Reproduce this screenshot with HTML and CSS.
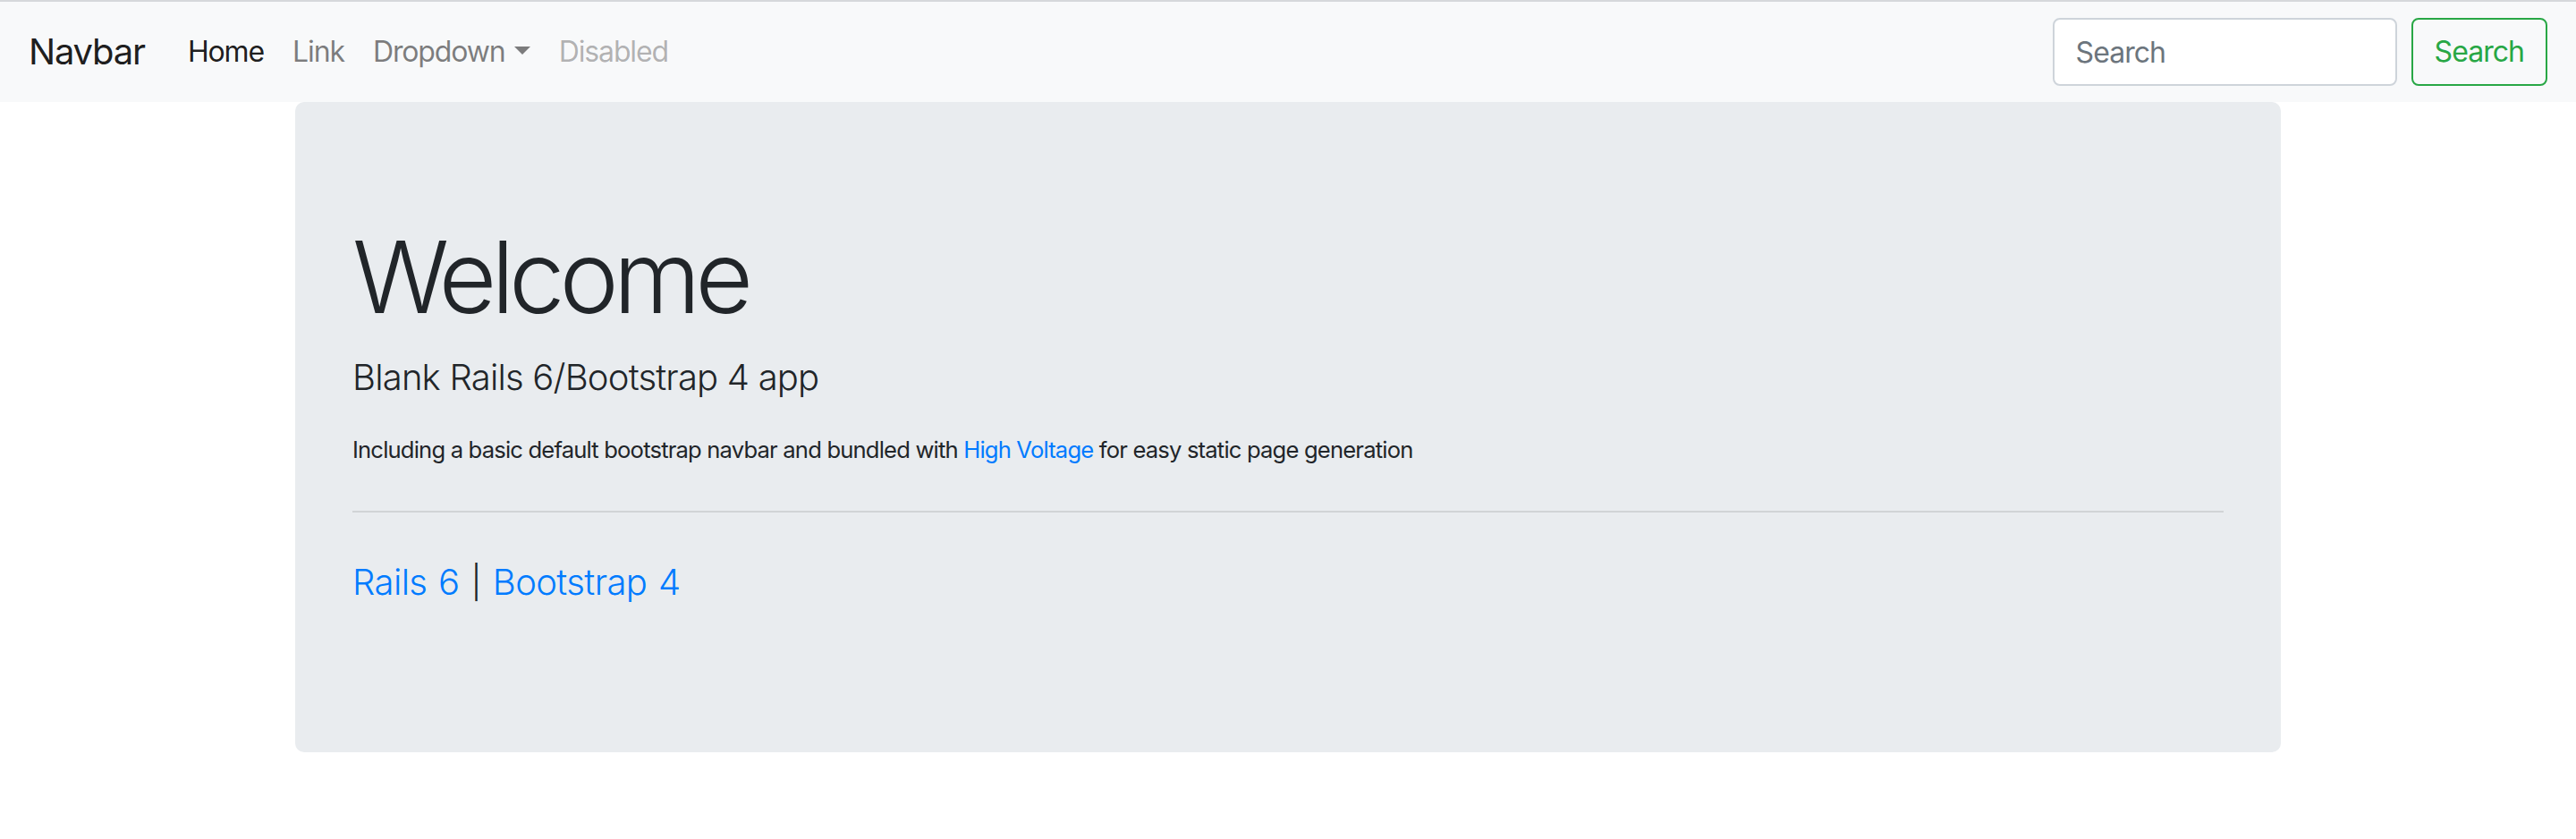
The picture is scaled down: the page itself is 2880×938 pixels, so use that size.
FILE: index.html
```html
<!DOCTYPE html>
<html lang="en">
<head>
<meta charset="utf-8">
<title>Blank Rails 6/Bootstrap 4 app</title>
<link rel="stylesheet" href="styles.css">
</head>
<body>
<div class="page">
  <nav class="navbar">
    <div class="navbar-left">
      <a class="brand" href="#">Navbar</a>
      <ul class="nav">
        <li><a class="nav-link active" href="#">Home</a></li>
        <li><a class="nav-link" href="#">Link</a></li>
        <li><a class="nav-link dropdown" href="#">Dropdown<span class="caret"></span></a></li>
        <li><a class="nav-link disabled" href="#">Disabled</a></li>
      </ul>
    </div>
    <form class="search-form">
      <input class="search-input" type="search" placeholder="Search" aria-label="Search">
      <button class="btn-outline-success" type="button">Search</button>
    </form>
  </nav>
  <main class="container">
    <div class="jumbotron">
      <h1 class="display-4">Welcome</h1>
      <p class="lead">Blank Rails 6/Bootstrap 4 app</p>
      <p class="small-text">Including a basic default bootstrap navbar and bundled with <a href="#">High Voltage</a> for easy static page generation</p>
      <hr class="divider">
      <p class="lead lead-links"><a href="#">Rails 6</a> <span class="pipe">|</span> <a href="#">Bootstrap 4</a></p>
    </div>
  </main>
</div>
</body>
</html>
```

FILE: styles.css
```css
* {
  box-sizing: border-box;
}

html, body {
  margin: 0;
  padding: 0;
  background: #ffffff;
}

body {
  font-family: "Inter", "Liberation Sans", sans-serif;
  font-size: 32px;
  line-height: 1.5;
  color: #212529;
}

a {
  color: #007bff;
  text-decoration: none;
}

.page {
  border-top: 2px solid #d6d8db;
}

.navbar {
  display: flex;
  align-items: center;
  justify-content: space-between;
  padding: 16px 32px;
  background: #f8f9fa;
}

.navbar-left {
  display: flex;
  align-items: center;
}

.brand {
  font-size: 40px;
  line-height: 60px;
  padding: 10px 0;
  margin-right: 32px;
  letter-spacing: -0.03em;
  color: rgba(0, 0, 0, 0.9);
}

.nav {
  display: flex;
  list-style: none;
  margin: 0;
  padding: 0;
}

.nav-link {
  display: block;
  padding: 16px 16px;
  line-height: 48px;
  letter-spacing: -0.035em;
  color: rgba(0, 0, 0, 0.5);
}

.nav-link.active {
  color: rgba(0, 0, 0, 0.9);
}

.nav-link.disabled {
  color: rgba(0, 0, 0, 0.3);
}

.caret {
  display: inline-block;
  margin-left: 10px;
  vertical-align: 8px;
  border-top: 9.6px solid rgba(0, 0, 0, 0.5);
  border-left: 9.6px solid transparent;
  border-right: 9.6px solid transparent;
  border-bottom: 0;
}

.search-form {
  display: flex;
  align-items: center;
}

.search-input {
  width: 385px;
  height: 76px;
  margin-right: 16px;
  padding: 12px 24px;
  font-family: inherit;
  font-size: 32px;
  line-height: 1.5;
  letter-spacing: -0.03em;
  color: #495057;
  background: #ffffff;
  border: 2px solid #ced4da;
  border-radius: 8px;
  outline: none;
}

.search-input::placeholder {
  color: #6c757d;
  opacity: 1;
}

.btn-outline-success {
  height: 76px;
  padding: 12px 24px;
  font-family: inherit;
  font-size: 32px;
  line-height: 1.5;
  letter-spacing: -0.03em;
  color: #28a745;
  background: transparent;
  border: 2px solid #28a745;
  border-radius: 8px;
}

.container {
  width: 2280px;
  margin: 0 auto;
  padding: 0 30px;
}

.jumbotron {
  background: #e9ecef;
  padding: 128px 64px;
  border-radius: 10px;
  margin-bottom: 64px;
}

.display-4 {
  font-size: 112px;
  font-weight: 300;
  line-height: 1.2;
  letter-spacing: -0.055em;
  margin: 0 0 16px;
}

.lead {
  font-size: 40px;
  font-weight: 300;
  line-height: 1.5;
  letter-spacing: -0.02em;
  margin: 0 0 32px;
}

.small-text {
  font-size: 25.6px;
  line-height: 1.5;
  letter-spacing: -0.032em;
  margin: 0;
}

.divider {
  margin: 48px 0;
  border: 0;
  border-top: 2px solid rgba(0, 0, 0, 0.1);
  height: 0;
}

.lead-links {
  margin-bottom: 32px;
  letter-spacing: -0.015em;
  word-spacing: 2px;
}

.pipe {
  display: inline-block;
  transform: scaleY(0.9);
}
```
